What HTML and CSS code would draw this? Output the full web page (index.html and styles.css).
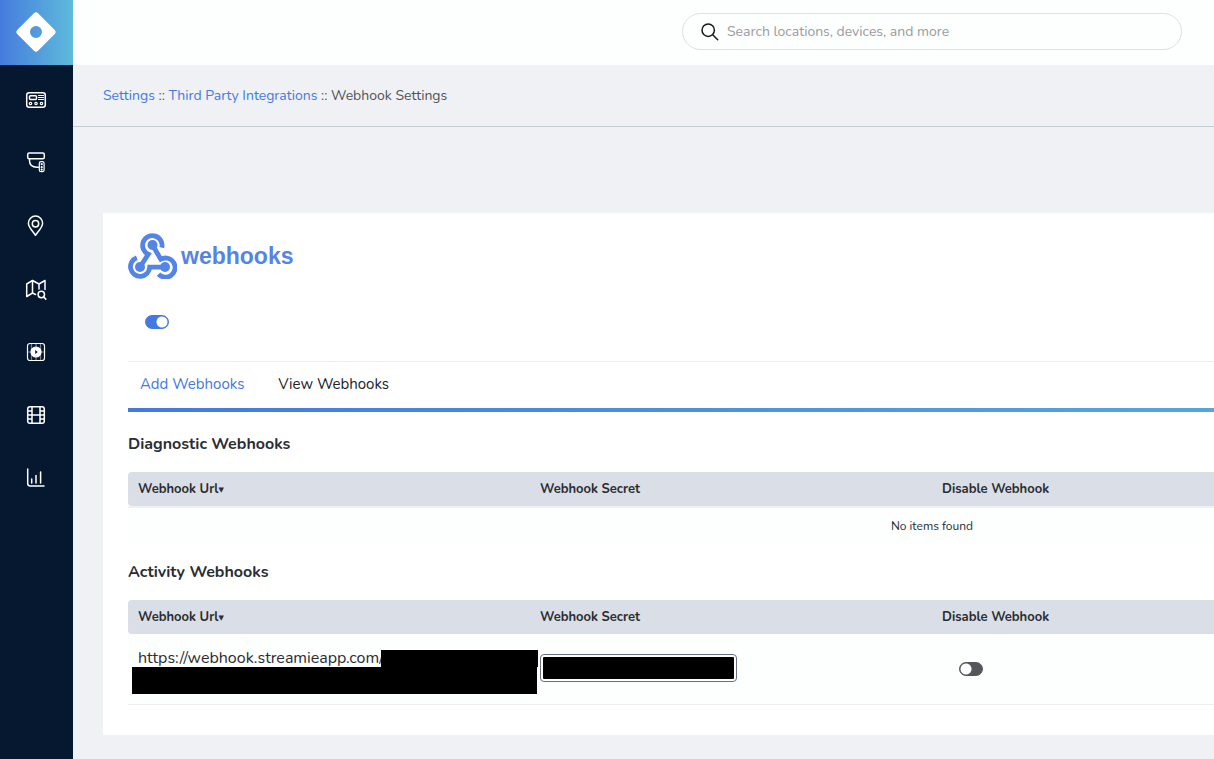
FILE: index.html
```html
<!DOCTYPE html>
<html lang="en">
<head>
<meta charset="utf-8">
<title>Webhook Settings</title>
<link rel="stylesheet" href="styles.css">
</head>
<body>
<div class="app">
  <aside class="sidebar">
    <a class="brand" href="#" aria-label="Home">
      <svg width="40" height="40" viewBox="0 0 40 40"><path fill="#fff" fill-rule="evenodd" d="M17.7 1.5a3.2 3.2 0 0 1 4.6 0l16.2 16.2a3.2 3.2 0 0 1 0 4.6L22.3 38.5a3.2 3.2 0 0 1-4.6 0L1.5 22.3a3.2 3.2 0 0 1 0-4.6ZM20 14a6 6 0 1 0 0 12 6 6 0 0 0 0-12Z"/></svg>
    </a>
    <nav class="menu" aria-label="Main">
      <a class="menu-link" href="#" aria-label="Devices"><svg class="icon" viewBox="0 0 22 22"><rect class="bold" x="1.700" y="3.700" width="18.600" height="14.600" rx="2.500"/><rect class="bold" x="4.500" y="6.700" width="7" height="3.800" rx="1"/><path d="M13.500 6.500h5M13.500 8.500h5M13.500 10.500h5"/><circle cx="5.500" cy="14.500" r="1.200"/><circle cx="11" cy="14.500" r="1.200"/><circle cx="16.500" cy="14.500" r="1.200"/></svg></a>
      <a class="menu-link" href="#" aria-label="Cameras"><svg class="icon" viewBox="0 0 22 22"><rect class="bold" x="2.700" y="1" width="16.600" height="5.700" rx="1.500"/><path class="bold" d="M4.500 6.700v2c0 4 3 6.300 7.500 6.500h1.500"/><rect x="14.300" y="9.700" width="4.800" height="10" rx="1.800"/><circle cx="16.700" cy="12.200" r="0.500"/><circle cx="16.700" cy="15.200" r="0.500"/><circle cx="16.700" cy="17.700" r="0.500"/></svg></a>
      <a class="menu-link" href="#" aria-label="Locations"><svg class="icon" viewBox="0 0 22 22"><path class="bold" d="M10.500 20.300C8.500 17 3.400 12.500 3.400 8.200a7.100 7.100 0 0 1 14.200 0c0 4.300-5.100 8.800-7.100 12.100Z"/><circle class="bold" cx="10.500" cy="8.700" r="3.200"/></svg></a>
      <a class="menu-link" href="#" aria-label="Maps"><svg class="icon" viewBox="0 0 22 22"><path class="bold" d="M10.500 16.500 7.500 15 1.700 18.500V6l5.800-3.500 6.500 3.500 6-3.500v9M7.500 2.500V15M14 6v5"/><circle class="bold" cx="16.300" cy="16.500" r="3.200"/><path class="bold" d="m18.600 18.900 2.200 2.200"/></svg></a>
      <a class="menu-link" href="#" aria-label="Recordings"><svg class="icon" viewBox="0 0 22 22"><rect x="2.500" y="2.500" width="17" height="17" rx="2.500"/><path d="M11 2.500v17M2.500 11h17M6.500 3v16M15.500 3v16" opacity=".45"/><circle cx="11" cy="11" r="5" fill="#fff"/><path class="dark" d="m10.200 9 2.600 2-2.600 2Z"/></svg></a>
      <a class="menu-link" href="#" aria-label="Clips"><svg class="icon" viewBox="0 0 22 22"><rect class="bold" x="2.700" y="2.700" width="16.600" height="16.600" rx="2.300"/><path class="bold" d="M7 3v16M15 3v16M7 11h8M3 7h4M3 11h4M3 15h4M15 7h4M15 11h4M15 15h4"/></svg></a>
      <a class="menu-link" href="#" aria-label="Reports"><svg class="icon" viewBox="0 0 22 22"><path class="bold" d="M2.700 2v14.600a2.400 2.400 0 0 0 2.400 2.400H19M6.700 12v4M11 8.500V16M15.600 5v11"/></svg></a>
    </nav>
  </aside>
  <div class="page">
    <header class="topbar">
      <label class="search">
        <svg class="search-icon" width="18" height="18" viewBox="0 0 18 18"><circle cx="7.200" cy="7.200" r="6.200"/><path d="m11.700 11.700 5 5"/></svg>
        <input class="search-input" type="search" placeholder="Search locations, devices, and more" aria-label="Search">
      </label>
    </header>
    <nav class="crumbs" aria-label="Breadcrumb"><a href="#">Settings</a> :: <a href="#">Third Party Integrations</a> :: Webhook Settings</nav>
    <main class="content">
      <section class="card">
        <div class="logo">
          <svg width="49" height="46" viewBox="0 0 49 46" fill="none" stroke="#5384e6" stroke-width="4.800">
            <path d="M33.800 14.600A9.700 9.700 0 1 0 20.300 21.200L12 34"/>
            <path d="M24.500 12 32.800 26.200A9.600 9.600 0 1 1 30.500 41.200"/>
            <path d="M8.800 24.700A9.600 9.600 0 1 0 21.700 34.100H37"/>
            <g fill="#5384e6" stroke="none"><circle cx="24.500" cy="12" r="5"/><circle cx="12" cy="34" r="5"/><circle cx="37" cy="34" r="5"/></g>
          </svg>
          <span class="logo-text">webhooks</span>
        </div>
        <div class="master"><input class="toggle" type="checkbox" aria-label="Enable webhooks" checked></div>
        <div class="tabs" role="tablist">
          <button class="tab active" role="tab" aria-selected="true">Add Webhooks</button>
          <button class="tab" role="tab" aria-selected="false">View Webhooks</button>
        </div>
        <div class="tab-line"></div>
        <h2 class="heading first">Diagnostic Webhooks</h2>
        <table class="grid">
          <thead><tr><th>Webhook Url<span class="sort">▼</span></th><th>Webhook Secret</th><th>Disable Webhook</th><th></th></tr></thead>
          <tbody><tr class="none"><td colspan="4">No items found</td></tr></tbody>
        </table>
        <h2 class="heading">Activity Webhooks</h2>
        <table class="grid">
          <thead><tr><th>Webhook Url<span class="sort">▼</span></th><th>Webhook Secret</th><th>Disable Webhook</th><th></th></tr></thead>
          <tbody><tr class="item">
            <td class="url-cell"><div class="url"><span>https://webhook.streamieapp.com/</span><span class="mask"></span></div><div class="mask-row"></div></td>
            <td class="secret-cell"><input class="secret" type="text" aria-label="Webhook secret"></td>
            <td class="disable-cell"><input class="toggle" type="checkbox" aria-label="Disable webhook"></td>
            <td></td>
          </tr></tbody>
        </table>
      </section>
    </main>
  </div>
</div>
</body>
</html>
```
FILE: styles.css
```css
* { box-sizing: border-box; }
body {
  margin: 0;
  background: #eff1f5;
  color: #2a2d31;
  font-family: Nunito, Lato, sans-serif;
  font-size: 14px;
}
a { color: #4479df; text-decoration: none; }
input, button { font: inherit; margin: 0; }
.app { display: flex; min-height: 100vh; overflow: hidden; }
.sidebar { flex: 0 0 73px; background: #061730; }
.brand {
  display: flex;
  align-items: center;
  justify-content: center;
  height: 65px;
  padding: 0 1px 1px 0;
  background: linear-gradient(90deg, #467bde, #5dbbdb);
}
.menu { display: flex; flex-direction: column; padding: 3px 1px 0 0; }
.menu-link { display: flex; align-items: center; justify-content: center; height: 63px; }
.icon { width: 22px; height: 22px; fill: none; stroke: #fff; stroke-width: 1.2; stroke-linecap: round; stroke-linejoin: round; }
.icon .bold { stroke-width: 1.5; }
.icon .dark { fill: #061730; stroke: none; }
.page { flex: 1; min-width: 0; }
.topbar {
  display: flex;
  align-items: center;
  justify-content: flex-end;
  height: 65px;
  padding: 0 32px 2px;
  background: #fdfefe;
}
.search {
  display: flex;
  align-items: center;
  gap: 8px;
  width: 500px;
  height: 37px;
  padding: 0 18px;
  border: 1px solid #dee0e5;
  border-radius: 19px;
}
.search-icon { flex: none; fill: none; stroke: #17191d; stroke-width: 1.5; stroke-linecap: round; }
.search-input { flex: 1; min-width: 0; padding: 0; border: 0; outline: 0; background: none; }
.search-input::placeholder { color: #999b9f; opacity: 1; }
.crumbs {
  height: 62px;
  padding: 0 30px;
  border-bottom: 1px solid #c5cdd4;
  color: #515358;
  line-height: 61px;
}
.content { padding: 86px 0 24px 30px; }
.card { width: max-content; min-width: 100%; padding: 20px 25px 30px; background: #fff; }
.logo { display: flex; align-items: center; gap: 4px; height: 46px; }
.logo-text { color: #5384e6; font: bold 23px/46px "Liberation Sans", Arial, sans-serif; }
.master { display: flex; align-items: center; height: 83px; padding: 4px 17px 0; border-bottom: 1px solid #eceef0; }
.toggle {
  appearance: none;
  display: block;
  width: 24px;
  height: 14px;
  border: 1px solid #55565b;
  border-radius: 7px;
  background: radial-gradient(circle at 6px 6px, #fff 5px, #55565b 6px);
}
.toggle:checked { border-color: #4479df; background: radial-gradient(circle at 16px 6px, #fff 5px, #4479df 6px); }
.tabs { display: flex; gap: 10px; height: 46px; }
.tab { padding: 0 12px 2px; border: 0; background: none; color: #212327; font-size: 15px; }
.tab.active { color: #4479df; }
.tab-line { height: 4px; background: linear-gradient(90deg, #4479df, #5dbbdb); }
.heading { margin: 0; padding: 16px 0; font-size: 16px; font-weight: 700; line-height: 24px; }
.heading.first { padding-top: 20px; }
.grid { width: 1608px; table-layout: fixed; border-collapse: separate; border-spacing: 0; }
.grid th {
  height: 34px;
  padding: 0 10px;
  background: #dadee6;
  font-size: 13px;
  font-weight: 700;
  text-align: left;
}
.grid th:first-child { border-radius: 4px 0 0 4px; }
.grid th:last-child { border-radius: 0 4px 4px 0; }
.grid tbody tr { background: #fdfefe; }
.grid td { padding: 0 10px; }
.sort { font-family: "DejaVu Sans", sans-serif; font-size: 7px; vertical-align: 1px; }
.none td { height: 38px; border-top: 2px solid #eff1f5; font-size: 12px; text-align: center; }
.item td { height: 71px; border-bottom: 1px solid #eceef2; }
.grid .url-cell { padding: 6px 0 0 4px; }
.url { display: flex; width: 406px; height: 17px; padding-left: 6px; font-size: 16px; line-height: 17px; white-space: nowrap; }
.mask { flex: 1; margin-left: -3px; background: #000; }
.mask-row { width: 405px; height: 27px; background: #000; }
.grid .secret-cell { padding-bottom: 2px; }
.secret {
  display: block;
  width: 197px;
  height: 28px;
  padding: 2px;
  border: 1px solid #68727f;
  border-radius: 4px;
  background: #000 content-box;
}
.grid .disable-cell { padding-left: 27px; }
```
